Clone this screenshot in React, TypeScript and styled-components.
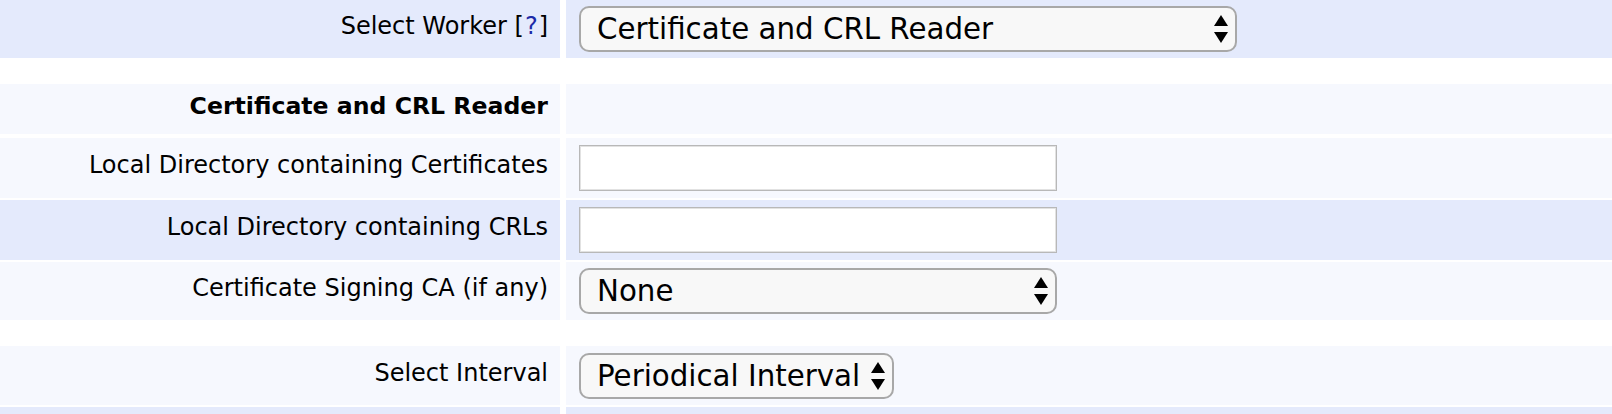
import React from 'react';
import styled, { createGlobalStyle } from 'styled-components';

const GlobalStyle = createGlobalStyle`
    body {
        margin: 0;
        background: #ffffff;
        font-family: "DejaVu Sans", Verdana, sans-serif;
        color: #000000;
    }
`

type Tone = 'blue' | 'light'

const toneColor = (tone: Tone) => (tone === 'blue' ? '#e4eafc' : '#f6f8fe')

const Form = styled.div`
    display: flex;
    flex-direction: column;
`

const Section = styled.div`
    display: flex;
    flex-direction: column;
    gap: 2px;
    & + & {
        margin-top: 26px;
    }
`

const Row = styled.div<{ $h: number; $header?: boolean }>`
    display: grid;
    grid-template-columns: 560px 1fr;
    column-gap: 6px;
    height: ${(props) => props.$h}px;
    margin-bottom: ${(props) => (props.$header ? '2px' : '0')};
`

const LabelCell = styled.div<{ $tone: Tone; $bold?: boolean }>`
    background: ${(props) => toneColor(props.$tone)};
    display: flex;
    align-items: center;
    justify-content: flex-end;
    padding-right: 12px;
    padding-bottom: 6px;
    font-size: ${(props) => (props.$bold ? '23.6px' : '24px')};
    font-weight: ${(props) => (props.$bold ? 'bold' : 'normal')};
    white-space: nowrap;
`

const ValueCell = styled.div<{ $tone: Tone }>`
    background: ${(props) => toneColor(props.$tone)};
    display: flex;
    align-items: center;
    padding-left: 13px;
`

const HelpLink = styled.a`
    color: #1c2aa8;
    text-decoration: none;
    margin: 0 1px;
`

const SelectBox = styled.div<{ $width?: number }>`
    box-sizing: border-box;
    display: inline-flex;
    align-items: center;
    height: 46px;
    width: ${(props) => (props.$width ? `${props.$width}px` : 'auto')};
    padding: 0 7px 0 16px;
    background: #f8f8f8;
    border: 2px solid #a8a8a8;
    border-radius: 10px;
    font-size: 29.3px;
    white-space: nowrap;
    span {
        flex: 1;
        margin-right: 11px;
    }
`

const TextInput = styled.input`
    box-sizing: border-box;
    width: 478px;
    height: 46px;
    margin: 0;
    border: 1px solid #b8b8b8;
    box-shadow: inset 0 0 0 1px #e2e2e2;
    background: #ffffff;
    font-family: inherit;
    font-size: 24px;
    outline: none;
`

const Arrows = () => (
    <svg width="14" height="28" viewBox="0 0 14 28">
        <polygon points="7,0 14,11 0,11" fill="#000" />
        <polygon points="0,17 14,17 7,28" fill="#000" />
    </svg>
)

const Select = ({ value, width }: { value: string; width?: number }) => (
    <SelectBox $width={width}>
        <span>{value}</span>
        <Arrows />
    </SelectBox>
)

const App = () => {
    return (
        <Form>
            <GlobalStyle />
            <Section>
                <Row $h={58}>
                    <LabelCell $tone="blue">
                        Select Worker [<HelpLink href="#">?</HelpLink>]
                    </LabelCell>
                    <ValueCell $tone="blue">
                        <Select value="Certificate and CRL Reader" width={658} />
                    </ValueCell>
                </Row>
            </Section>
            <Section>
                <Row $h={50} $header>
                    <LabelCell $tone="light" $bold>Certificate and CRL Reader</LabelCell>
                    <ValueCell $tone="light" />
                </Row>
                <Row $h={60}>
                    <LabelCell $tone="light">Local Directory containing Certificates</LabelCell>
                    <ValueCell $tone="light">
                        <TextInput type="text" />
                    </ValueCell>
                </Row>
                <Row $h={60}>
                    <LabelCell $tone="blue">Local Directory containing CRLs</LabelCell>
                    <ValueCell $tone="blue">
                        <TextInput type="text" />
                    </ValueCell>
                </Row>
                <Row $h={58}>
                    <LabelCell $tone="light">Certificate Signing CA (if any)</LabelCell>
                    <ValueCell $tone="light">
                        <Select value="None" width={478} />
                    </ValueCell>
                </Row>
            </Section>
            <Section>
                <Row $h={59}>
                    <LabelCell $tone="light">Select Interval</LabelCell>
                    <ValueCell $tone="light">
                        <Select value="Periodical Interval" />
                    </ValueCell>
                </Row>
                <Row $h={58}>
                    <LabelCell $tone="blue" />
                    <ValueCell $tone="blue" />
                </Row>
            </Section>
        </Form>
    )
}

export default App
